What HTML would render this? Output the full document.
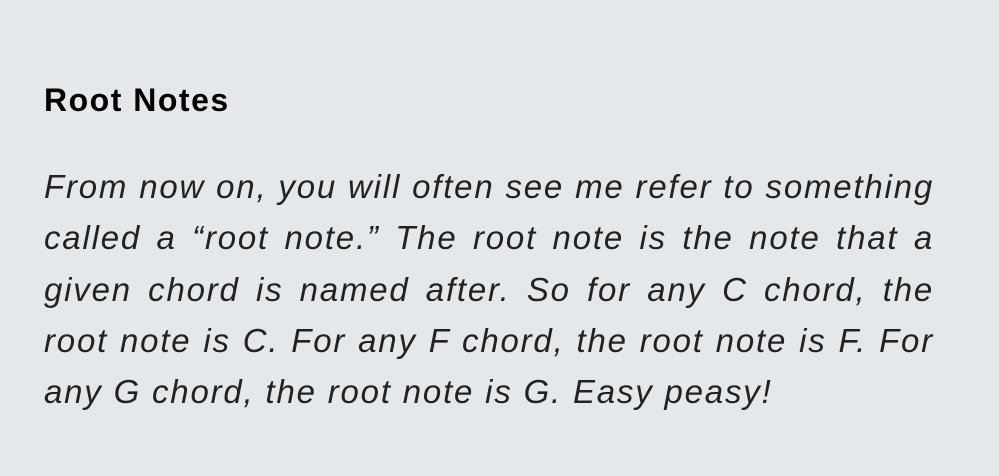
<!DOCTYPE html>
<html>
<head>
<meta charset="utf-8">
<style>
  html,body{margin:0;padding:0;}
  body{width:999px;height:476px;background:#e5e8eb;overflow:hidden;font-family:"Liberation Sans",sans-serif;color:#111;}
  h2{position:absolute;left:44px;top:80px;margin:0;font-size:32px;font-weight:bold;line-height:40px;letter-spacing:1.5px;color:#000;}
  .body{position:absolute;left:44px;top:161px;width:890px;font-style:italic;font-size:33px;line-height:51.3px;color:#222;letter-spacing:1.8px;}
  .l{display:block;text-align:justify;text-align-last:justify;white-space:nowrap;height:51.3px;}
  .last{text-align:left;text-align-last:left;}
</style>
</head>
<body>
<h2>Root Notes</h2>
<div class="body">
<span class="l">From now on, you will often see me refer to something</span>
<span class="l">called a “root note.” The root note is the note that a</span>
<span class="l">given chord is named after. So for any C chord, the</span>
<span class="l">root note is C. For any F chord, the root note is F. For</span>
<span class="l last">any G chord, the root note is G. Easy peasy!</span>
</div>
</body>
</html>
